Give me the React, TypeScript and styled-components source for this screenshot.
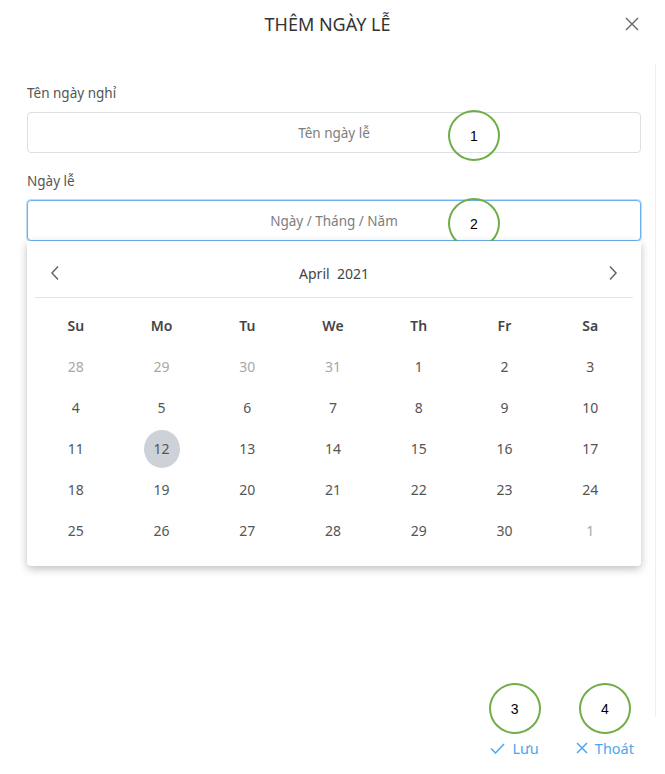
import { createGlobalStyle } from "styled-components";
import styled from "styled-components";

const GlobalStyle = createGlobalStyle`
  html, body {
    margin: 0;
    padding: 0;
    background: #fff;
  }
  * {
    box-sizing: border-box;
  }
`;

const WEEKDAYS = ["Su", "Mo", "Tu", "We", "Th", "Fr", "Sa"];

// April 2021, with the trailing days of March and first of May
const DAYS: { day: number; outside?: boolean }[] = [
  { day: 28, outside: true },
  { day: 29, outside: true },
  { day: 30, outside: true },
  { day: 31, outside: true },
  ...Array.from({ length: 30 }, (_, i) => ({ day: i + 1 })),
  { day: 1, outside: true },
];

const SELECTED = 12;

const App = () => {
  return (
    <>
      <GlobalStyle />
      <Modal>
        <Header>
          <span />
          <Title>THÊM NGÀY LỄ</Title>
          <CloseButton aria-label="close">
            <svg width="14" height="14" viewBox="0 0 14 14">
              <path d="M1 1 L13 13 M13 1 L1 13" stroke="#666" strokeWidth="1.4" fill="none" />
            </svg>
          </CloseButton>
        </Header>

        <Main>
          <Content>
            <Label>Tên ngày nghỉ</Label>
            <Field>
              <Input placeholder="Tên ngày lễ" />
              <Marker $left={421} $top={-2}>1</Marker>
            </Field>

            <Label $spaced>Ngày lễ</Label>
            <Field>
              <Input placeholder="Ngày / Tháng / Năm" $focused />
              <Marker $left={421} $top={-2}>2</Marker>

              <Calendar>
                <CalendarHeader>
                  <NavButton aria-label="previous month">
                    <svg width="10" height="16" viewBox="0 0 10 16">
                      <polyline points="8,1.5 2,8 8,14.5" stroke="#666" strokeWidth="1.5" fill="none" />
                    </svg>
                  </NavButton>
                  <MonthLabel>April&nbsp; 2021</MonthLabel>
                  <NavButton aria-label="next month">
                    <svg width="10" height="16" viewBox="0 0 10 16">
                      <polyline points="2,1.5 8,8 2,14.5" stroke="#666" strokeWidth="1.5" fill="none" />
                    </svg>
                  </NavButton>
                </CalendarHeader>
                <DayGrid>
                  {WEEKDAYS.map((w) => (
                    <Weekday key={w}>{w}</Weekday>
                  ))}
                  {DAYS.map((d, i) => (
                    <DayCell key={i}>
                      <Day $outside={d.outside} $selected={!d.outside && d.day === SELECTED}>
                        {d.day}
                      </Day>
                    </DayCell>
                  ))}
                </DayGrid>
              </Calendar>
            </Field>
          </Content>
          <ScrollTrack />
        </Main>

        <Footer>
          <ActionButton>
            <svg width="15" height="11" viewBox="0 0 15 11">
              <polyline points="1,5.5 5.5,10 14,1" stroke="#4ea6ee" strokeWidth="1.5" fill="none" />
            </svg>
            Lưu
            <Marker $left={0} $top={-55} $center>3</Marker>
          </ActionButton>
          <ActionButton>
            <svg width="12" height="12" viewBox="0 0 12 12">
              <path d="M1 1 L11 11 M11 1 L1 11" stroke="#4ea6ee" strokeWidth="1.5" fill="none" />
            </svg>
            Thoát
            <Marker $left={0} $top={-55} $center>4</Marker>
          </ActionButton>
        </Footer>
      </Modal>
    </>
  );
};

const Modal = styled.div`
  width: 665px;
  height: 774px;
  display: flex;
  flex-direction: column;
  font-family: "Noto Sans", "Open Sans", sans-serif;
  color: #555;
  background: #fff;
`;

const Header = styled.div`
  height: 48px;
  display: grid;
  grid-template-columns: 50px 1fr 60px;
  align-items: center;
`;

const Title = styled.h1`
  margin: 0;
  text-align: center;
  font-size: 18px;
  font-weight: 400;
  color: #333;
`;

const CloseButton = styled.button`
  justify-self: end;
  margin-right: 26px;
  border: none;
  background: none;
  padding: 0;
  width: 14px;
  height: 14px;
  display: flex;
  cursor: pointer;
`;

const Main = styled.div`
  flex: 1;
  display: flex;
`;

const Content = styled.div`
  flex: 1;
  padding: 35px 14px 0 27px;
`;

const ScrollTrack = styled.div`
  width: 1px;
  margin: 16px 9px 5px 0;
  background: #eeeeee;
`;

const Label = styled.div<{ $spaced?: boolean }>`
  font-size: 13.5px;
  line-height: 20px;
  color: #555;
  margin-top: ${(p) => (p.$spaced ? "18px" : "0")};
  margin-bottom: 9px;
`;

const Field = styled.div`
  position: relative;
`;

const Input = styled.input<{ $focused?: boolean }>`
  display: block;
  width: 100%;
  height: 41px;
  border: 1px solid ${(p) => (p.$focused ? "#6cb2f2" : "#dcdfe3")};
  box-shadow: ${(p) => (p.$focused ? "0 0 0 1px rgba(108, 178, 242, 0.45)" : "none")};
  border-radius: 4px;
  text-align: center;
  font-family: inherit;
  font-size: 13.5px;
  color: #555;
  outline: none;
  background: #fff;

  &::placeholder {
    color: #7d7d7d;
  }
`;

const Marker = styled.span<{ $left: number; $top: number; $center?: boolean }>`
  position: absolute;
  left: ${(p) => (p.$center ? "50%" : `${p.$left}px`)};
  top: ${(p) => p.$top}px;
  transform: ${(p) => (p.$center ? "translateX(-50%)" : "none")};
  width: 52px;
  height: 51px;
  border: 2px solid #70ad47;
  border-radius: 50%;
  display: flex;
  align-items: center;
  justify-content: center;
  font-family: "Liberation Sans", Arial, sans-serif;
  font-size: 14px;
  color: #000;
  pointer-events: none;
`;

const Calendar = styled.div`
  position: absolute;
  left: 0;
  right: 0;
  top: 41px;
  background: #fff;
  border-radius: 0 0 4px 4px;
  box-shadow: 0 3px 8px rgba(0, 0, 0, 0.25);
  padding: 0 8px 15px;
  z-index: 1;
`;

const CalendarHeader = styled.div`
  height: 57px;
  padding-top: 8px;
  display: flex;
  align-items: center;
  justify-content: space-between;
  padding-left: 15px;
  padding-right: 15px;
  border-bottom: 1px solid #e6e6e6;
`;

const NavButton = styled.button`
  border: none;
  background: none;
  padding: 0;
  display: flex;
  cursor: pointer;
`;

const MonthLabel = styled.div`
  font-size: 14px;
  color: #444;
`;

const DayGrid = styled.div`
  display: grid;
  grid-template-columns: repeat(7, 1fr);
  grid-auto-rows: 41px;
  padding-top: 7px;
  margin-left: -2px;
`;

const Weekday = styled.div`
  height: 40px;
  display: flex;
  align-items: center;
  justify-content: center;
  font-size: 14px;
  font-weight: 600;
  color: #444;
`;

const DayCell = styled.div`
  display: flex;
  align-items: center;
  justify-content: center;
`;

const Day = styled.span<{ $outside?: boolean; $selected?: boolean }>`
  width: 36px;
  height: 38px;
  border-radius: 50%;
  display: flex;
  align-items: center;
  justify-content: center;
  font-size: 14px;
  color: ${(p) => (p.$outside ? "#a8a8a8" : "#555")};
  background: ${(p) => (p.$selected ? "#cdd1d8" : "transparent")};
`;

const Footer = styled.div`
  height: 52px;
  display: flex;
  align-items: center;
  justify-content: flex-end;
  gap: 37px;
  padding-right: 31px;
`;

const ActionButton = styled.button`
  position: relative;
  display: flex;
  align-items: center;
  gap: 7px;
  border: none;
  background: none;
  padding: 0;
  font-family: inherit;
  font-size: 14.5px;
  color: #4ea6ee;
  cursor: pointer;
`;

export default App;
